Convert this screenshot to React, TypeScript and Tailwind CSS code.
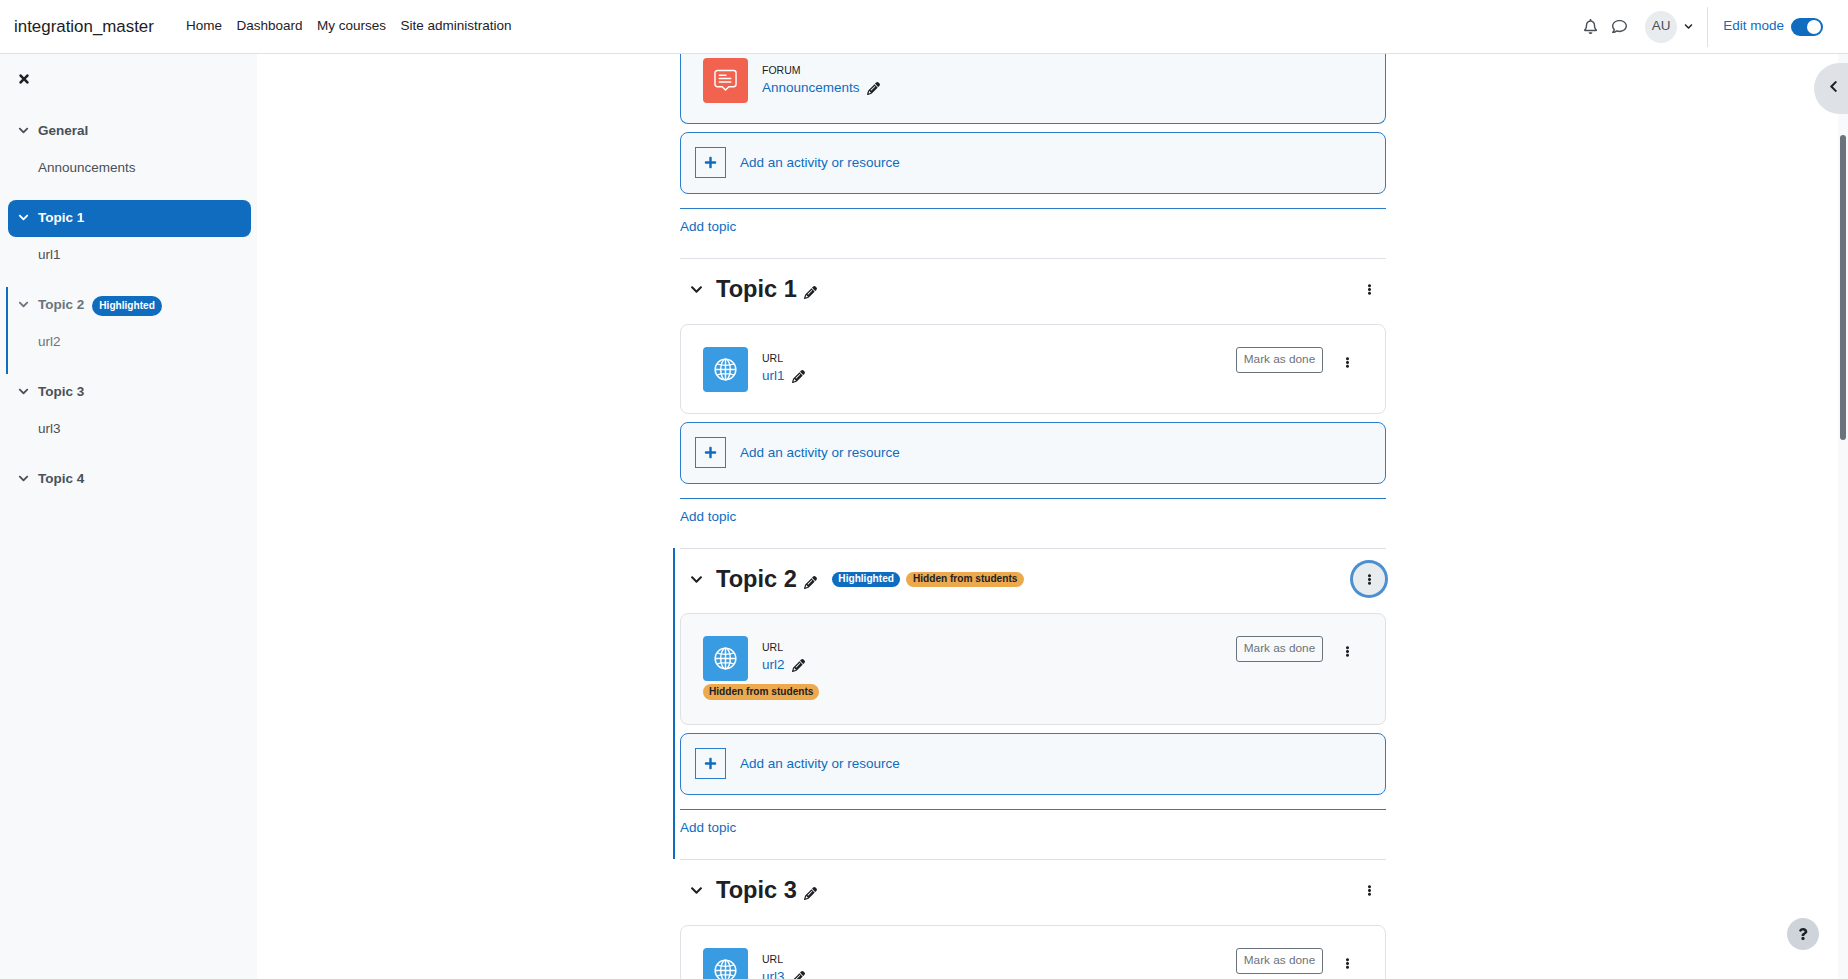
import {
  FaChevronDown,
  FaChevronLeft,
  FaEllipsisV,
  FaPlus,
  FaQuestion,
  FaRegBell,
  FaRegComment,
  FaTimes,
} from "react-icons/fa";
import { FaPencil } from "react-icons/fa6";

const navLinks = ["Home", "Dashboard", "My courses", "Site administration"];

const drawerGroups = [
  { title: "General", items: ["Announcements"] },
  { title: "Topic 1", items: ["url1"], active: true },
  { title: "Topic 2", items: ["url2"], highlighted: true },
  { title: "Topic 3", items: ["url3"] },
  { title: "Topic 4", items: [] as string[] },
];

function GlobeIcon() {
  return (
    <svg width="23" height="23" viewBox="0 0 24 24" fill="none" stroke="white" strokeWidth="1.5">
      <circle cx="12" cy="12" r="10.8" />
      <ellipse cx="12" cy="12" rx="5" ry="10.8" />
      <path d="M12 1.2v21.6M1.2 12h21.6M3 6.2c5 2 13 2 18 0M3 17.8c5-2 13-2 18 0" />
    </svg>
  );
}

function ForumIcon() {
  return (
    <svg width="23" height="23" viewBox="0 0 24 24" fill="none" stroke="white" strokeWidth="1.5" strokeLinecap="round">
      <path d="M3.5 1.5h17a2.5 2.5 0 0 1 2.5 2.5v12a2.5 2.5 0 0 1-2.5 2.5h-5L12 22l-3.5-3.5h-5A2.5 2.5 0 0 1 1 16V4a2.5 2.5 0 0 1 2.5-2.5z" />
      <path d="M5.5 6.5h7M5.5 10h12M5.5 13.5h12" />
    </svg>
  );
}

function Badge({ kind, className = "" }: { kind: "highlighted" | "hidden"; className?: string }) {
  return (
    <span
      className={
        "inline-flex items-center rounded-full text-[10.125px] font-bold " +
        (kind === "highlighted" ? "bg-[#0f6cbf] text-white " : "bg-[#eca94e] text-[#1d2125] ") +
        className
      }
    >
      {kind === "highlighted" ? "Highlighted" : "Hidden from students"}
    </span>
  );
}

function AddActivity() {
  return (
    <div className="mt-[8.5px] flex h-[61.5px] items-center gap-[14px] rounded-[8px] border border-[#2a7dc9] bg-[#f5f9fc] pl-[14px]">
      <span className="flex h-[31px] w-[31px] items-center justify-center border border-[#2a7dc9] text-[#0f6cbf]">
        <FaPlus size={13} />
      </span>
      <span className="text-[#0f6cbf]">Add an activity or resource</span>
    </div>
  );
}

function AddTopic() {
  return (
    <div className="mt-[14.5px] h-[50px] border-t border-[#2a7dc9] pt-[7.5px] text-[#0f6cbf]">Add topic</div>
  );
}

function ActivityCard({ name, hidden }: { name: string; hidden?: boolean }) {
  return (
    <div
      className={
        "flex items-start justify-between rounded-[8px] border border-[#dee2e6] pt-[22px] pl-[22px] pr-[22px] " +
        (hidden ? "h-[111.5px] bg-[#f8f9fa]" : "h-[89.5px] bg-white")
      }
    >
      <div>
        <div className="flex items-center gap-[14px]">
          <span className="flex h-[45px] w-[45px] items-center justify-center rounded-[4px] bg-[#399be2]">
            <GlobeIcon />
          </span>
          <div className="-mt-[2px]">
            <div className="text-[10.5px] leading-[15px] text-[#1d2125]">URL</div>
            <div className="flex items-center gap-[7px] leading-[20px] text-[#0f6cbf]">
              {name}
              <FaPencil size={13} className="text-[#1d2125]" />
            </div>
          </div>
        </div>
        {hidden && <Badge kind="hidden" className="mt-[3px] h-[16px] px-[6px]" />}
      </div>
      <div className="flex items-start gap-[8px]">
        <span className="flex h-[26px] w-[87px] items-center justify-center rounded-[3px] border border-[#6a737b] text-[11.81px] text-[#6a737b]">
          Mark as done
        </span>
        <span className="flex h-[30px] w-[32px] items-center justify-center text-[#1d2125]">
          <FaEllipsisV size={11} />
        </span>
      </div>
    </div>
  );
}

function TopicSection({
  title,
  name,
  hidden,
  focused,
  last,
}: {
  title: string;
  name: string;
  hidden?: boolean;
  focused?: boolean;
  last?: boolean;
}) {
  const body = (
    <div className="border-t border-[#dee2e6]">
      <div className={"flex items-start pt-[14px] " + (hidden ? "h-[64px]" : "h-[65px]")}>
        <span className="ml-[10px] flex h-[32px] w-[26px] items-center pt-[1px] text-[#1d2125]">
          <FaChevronDown size={13} />
        </span>
        <h3 className="h-[32px] text-[23.6px] font-bold leading-[32px] text-[#1d2125]">{title}</h3>
        <span className="ml-[7px] flex h-[32px] items-center pt-[6px] text-[#1d2125]">
          <FaPencil size={13} />
        </span>
        {hidden && (
          <span className="ml-[15px] flex h-[32px] items-center gap-[6px]">
            <Badge kind="highlighted" className="h-[15px] px-[6.5px]" />
            <Badge kind="hidden" className="h-[15px] px-[6.5px]" />
          </span>
        )}
        <span
          className={
            "ml-auto mr-[1px] flex h-[32px] w-[32px] items-center justify-center rounded-full text-[#1d2125] " +
            (focused ? "bg-[#e9ecef] shadow-[0_0_0_3px_#4a90d0]" : "")
          }
        >
          <FaEllipsisV size={11} />
        </span>
      </div>
      <ActivityCard name={name} hidden={hidden} />
      {!last && <AddActivity />}
      {!last && <AddTopic />}
    </div>
  );

  if (hidden) {
    return <div className="-ml-[7px] border-l-2 border-[#0f6cbf] pl-[5px]">{body}</div>;
  }
  return body;
}

export default function App() {
  return (
    <div className="relative flex h-[979px] flex-col overflow-hidden bg-white font-['Liberation_Sans',Arial,sans-serif] text-[13.5px] text-[#1d2125]">
      {/* navbar */}
      <header className="flex h-[54px] shrink-0 items-center border-b border-[#dee2e6] bg-white pl-[14px] pr-[25px]">
        <span className="mr-[32px] text-[16.9px]">integration_master</span>
        <nav className="flex gap-[14.5px]">
          {navLinks.map((link) => (
            <a key={link}>{link}</a>
          ))}
        </nav>
        <div className="ml-auto flex items-center">
          <FaRegBell size={15} className="text-[#495057]" />
          <FaRegComment size={15} className="ml-[14px] text-[#495057]" />
          <span className="ml-[18px] flex h-[32px] w-[32px] items-center justify-center rounded-full bg-[#e9ecef] text-[#495057]">
            AU
          </span>
          <FaChevronDown size={9} className="ml-[7px] text-[#1d2125]" />
          <span className="ml-[14px] h-[40px] w-px bg-[#dee2e6]" />
          <span className="ml-[15px] text-[#0f6cbf]">Edit mode</span>
          <span className="ml-[7px] flex h-[18px] w-[32px] items-center justify-end rounded-full bg-[#0f6cbf] pr-[2px]">
            <span className="h-[14px] w-[14px] rounded-full bg-white" />
          </span>
        </div>
      </header>

      <div className="flex min-h-0 flex-1">
        {/* course index */}
        <aside className="w-[257px] shrink-0 bg-[#f8f9fa]">
          <div className="flex h-[59px] items-start pl-[17px] pt-[18px] text-[#1d2125]">
            <FaTimes size={14} />
          </div>
          {drawerGroups.map((group) => (
            <div
              key={group.title}
              className={
                "mx-[6px] h-[87px] border-l-2 " +
                (group.highlighted ? "border-[#0f6cbf] text-[#6a737b]" : "border-transparent text-[#495057]")
              }
            >
              <div
                className={
                  "flex h-[37px] items-center gap-[9px] rounded-[8px] pl-[10px] font-bold " +
                  (group.active ? "bg-[#0f6cbf] text-white" : "")
                }
              >
                <FaChevronDown size={11} className="-mt-[3px]" />
                {group.title}
                {group.highlighted && <Badge kind="highlighted" className="-ml-[1px] h-[20px] px-[7px]" />}
              </div>
              {group.items.map((item) => (
                <div key={item} className="flex h-[37px] items-center pl-[30px]">
                  {item}
                </div>
              ))}
            </div>
          ))}
        </aside>

        {/* course content, scrolled part way down */}
        <main className="ml-[423px] w-[706px] shrink-0">
          <div className="flex h-[69.5px] items-start gap-[14px] rounded-b-[8px] border-x border-b border-[#2a7dc9] bg-[#f5f9fc] pl-[22px] pt-[4px]">
            <span className="flex h-[45px] w-[45px] items-center justify-center rounded-[4px] bg-[#f1634f]">
              <ForumIcon />
            </span>
            <div className="pt-[5px]">
              <div className="text-[10.5px] leading-[15px]">FORUM</div>
              <div className="flex items-center gap-[7px] leading-[20px] text-[#0f6cbf]">
                Announcements
                <FaPencil size={13} className="text-[#1d2125]" />
              </div>
            </div>
          </div>
          <AddActivity />
          <AddTopic />
          <TopicSection title="Topic 1" name="url1" />
          <TopicSection title="Topic 2" name="url2" hidden focused />
          <TopicSection title="Topic 3" name="url3" last />
        </main>

        <div className="ml-auto flex w-[10px] shrink-0 justify-center bg-[#f8f9fa] pt-[81px]">
          <div className="h-[305px] w-[6px] rounded-full bg-[#6a737b]" />
        </div>
      </div>

      {/* floating buttons */}
      <div className="absolute right-0 top-[63px] flex h-[51px] w-[34px] items-start rounded-l-full bg-[#dee2e6] pl-[13px] pt-[17px] text-[#1d2125]">
        <FaChevronLeft size={13} />
      </div>
      <div className="absolute left-[1787px] top-[918px] flex h-[32px] w-[32px] items-center justify-center rounded-full bg-[#ced4da] text-[#1d2125]">
        <FaQuestion size={12} />
      </div>
    </div>
  );
}
